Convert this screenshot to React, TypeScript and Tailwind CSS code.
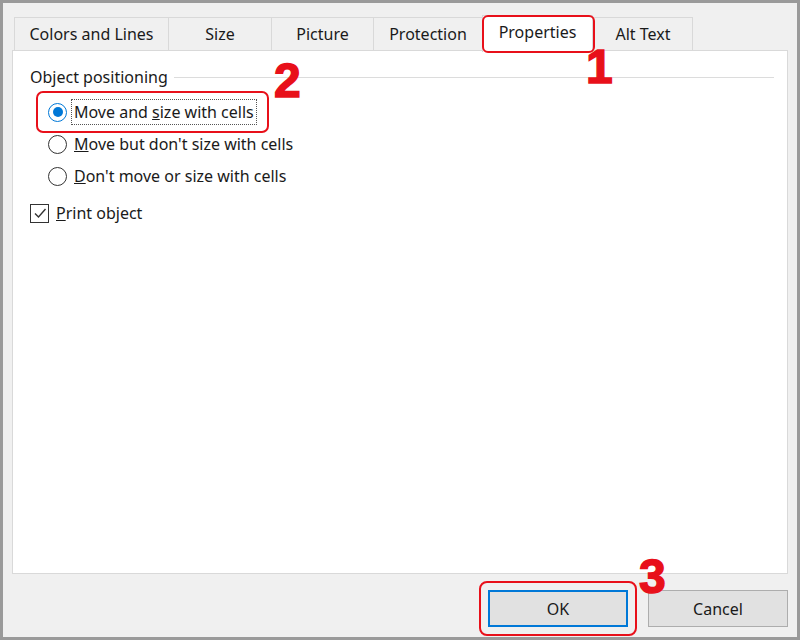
import React from 'react'

const tabs = [
  { label: 'Colors and Lines', w: 'w-[154px]' },
  { label: 'Size', w: 'w-[103px]' },
  { label: 'Picture', w: 'w-[102px]' },
  { label: 'Protection', w: 'w-[109px]' },
  { label: 'Properties', w: 'w-[111px]', active: true },
  { label: 'Alt Text', w: 'w-[100px]' },
]

function Radio({ checked }: { checked?: boolean }) {
  return (
    <span
      className={`shrink-0 w-[19px] h-[19px] rounded-full border-[1.5px] bg-white flex items-center justify-center ${
        checked ? 'border-[#0078d7]' : 'border-[#333333]'
      }`}
    >
      {checked && <span className="w-[10px] h-[10px] rounded-full bg-[#0078d7]" />}
    </span>
  )
}

function RedNumber({ n, className }: { n: string; className: string }) {
  return (
    <span
      className={`absolute font-['Liberation_Sans',Arial,sans-serif] font-bold text-[48px] leading-none text-[#e8101a] [-webkit-text-stroke:1.5px_#e8101a] ${className}`}
    >
      {n}
    </span>
  )
}

export default function App() {
  return (
    <div className="relative w-[800px] h-[640px] border-[3px] border-[#9a9a9a] bg-[#f0f0f0] flex flex-col pt-[12px] px-[9px] font-['Noto_Sans',sans-serif] text-[16px] text-[#1a1a1a]">
      {/* tab strip */}
      <div className="flex items-end h-[35px] pl-[2px]">
        {tabs.map((t, i) => (
          <div
            key={t.label}
            className={`${t.w} flex items-center justify-center border-t border-l border-[#d9d9d9] ${
              i === tabs.length - 1 ? 'border-r' : ''
            } ${
              t.active
                ? 'relative z-10 h-[37px] -mb-[2px] bg-white border-r pb-[4px]'
                : 'h-[33px] bg-[#f0f0f0]'
            }`}
          >
            {t.label}
            {t.active && (
              <span className="absolute -left-[1px] -top-[1px] w-[113px] h-[38px] rounded-[6px] border-2 border-[#e8101a]" />
            )}
          </div>
        ))}
      </div>

      {/* tab panel */}
      <div className="h-[524px] bg-white border border-[#d9d9d9] pt-[16px] pl-[17px] pr-[13px]">
        <div className="flex items-center gap-[6px] h-[20px]">
          <span>Object positioning</span>
          <span className="flex-1 h-px bg-[#dcdcdc]" />
        </div>

        <div className="mt-[9px] ml-[18px] flex flex-col">
          <div className="relative flex items-center h-[32px]">
            <Radio checked />
            <span className="ml-[4px] px-[2px] leading-[24px] border border-dotted border-[#555555]">
              Move and <u>s</u>ize with cells
            </span>
            <span className="absolute -left-[12px] -top-[5px] w-[233px] h-[42px] rounded-[7px] border-[2.5px] border-[#e8101a]" />
          </div>
          <div className="flex items-center h-[32px]">
            <Radio />
            <span className="ml-[7px]">
              <u>M</u>ove but don't size with cells
            </span>
          </div>
          <div className="flex items-center h-[32px]">
            <Radio />
            <span className="ml-[7px]">
              <u>D</u>on't move or size with cells
            </span>
          </div>
        </div>

        <div className="mt-[5px] flex items-center h-[32px]">
          <span className="w-[19px] h-[19px] border-[1.5px] border-[#333333] bg-white flex items-center justify-center">
            <svg width="14" height="14" viewBox="0 0 14 14" fill="none">
              <path d="M2 7.5 L5.5 11 L12.5 3" stroke="#333333" strokeWidth="1.4" />
            </svg>
          </span>
          <span className="ml-[7px]">
            <u>P</u>rint object
          </span>
        </div>
      </div>

      {/* buttons */}
      <div className="mt-[16px] flex justify-end gap-[20px]">
        <div className="relative">
          <button className="w-[140px] h-[37px] bg-[#e1e1e1] border-2 border-[#0078d7] text-[16px]">OK</button>
          <span className="absolute -left-[9px] -top-[9px] w-[158px] h-[55px] rounded-[8px] border-[2.5px] border-[#e8101a]" />
        </div>
        <button className="w-[140px] h-[37px] bg-[#e1e1e1] border border-[#adadad] text-[16px]">Cancel</button>
      </div>

      <RedNumber n="1" className="left-[583px] top-[40px]" />
      <RedNumber n="2" className="left-[271px] top-[54px]" />
      <RedNumber n="3" className="left-[636px] top-[550px]" />
    </div>
  )
}
